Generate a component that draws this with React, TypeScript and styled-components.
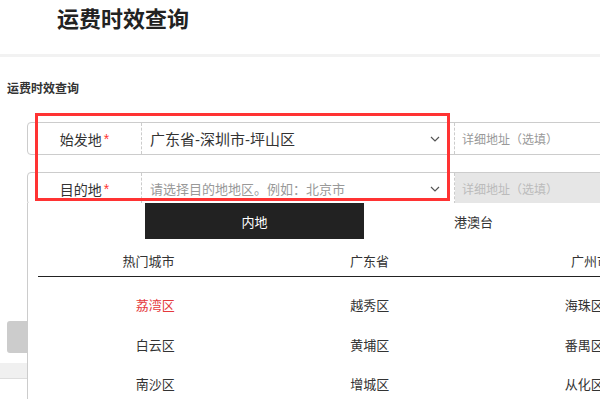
import React from 'react';
import styled, { createGlobalStyle } from 'styled-components';

const GlobalStyle = createGlobalStyle`
  html, body {
    margin: 0;
    padding: 0;
    overflow: hidden;
    background: #fff;
    font-family: "Liberation Sans", "Noto Sans CJK SC", sans-serif;
    color: #333;
  }
`;

const Page = styled.div`
  width: 600px;
  height: 399px;
  overflow: hidden;
`;

const Header = styled.header`
  height: 54px;
  box-sizing: border-box;
  padding: 4px 0 0 57px;
  border-bottom: 3px solid #f2f2f2;
  height: 57px;
`;

const Title = styled.h1`
  margin: 0;
  font-size: 22px;
  line-height: 32px;
  font-weight: bold;
  color: #222;
`;

const Content = styled.main`
  padding-left: 7px;
`;

const SectionTitle = styled.h2`
  margin: 24px 0 0;
  font-size: 12px;
  line-height: 16px;
  font-weight: bold;
  color: #333;
`;

const Form = styled.div`
  position: relative;
  margin: 25px 0 0 20px;
`;

const Row = styled.div<{ $gap?: number }>`
  position: relative;
  display: flex;
  width: 700px;
  height: 33px;
  box-sizing: border-box;
  margin-top: ${({ $gap }) => $gap ?? 0}px;
  border: 1px solid #ccc;
  border-radius: 4px;
`;

const Label = styled.div`
  width: 114px;
  box-sizing: border-box;
  border-right: 1px dashed #ccc;
  display: flex;
  align-items: center;
  justify-content: center;
  font-size: 14px;
  color: #333;
`;

const Required = styled.span`
  color: #f33;
  margin-left: 2px;
  font-size: 14px;
`;

const Select = styled.div<{ $placeholder?: boolean }>`
  width: 313px;
  box-sizing: border-box;
  border-right: 1px dashed #ccc;
  display: flex;
  align-items: center;
  justify-content: space-between;
  padding: 0 14px 0 8px;
  font-size: ${({ $placeholder }) => ($placeholder ? 13 : 15)}px;
  color: ${({ $placeholder }) => ($placeholder ? '#999' : '#333')};
`;

const Detail = styled.div<{ $disabled?: boolean }>`
  flex: 1;
  display: flex;
  align-items: center;
  padding-left: 7px;
  font-size: 12px;
  color: ${({ $disabled }) => ($disabled ? '#bbb' : '#999')};
  background: ${({ $disabled }) => ($disabled ? '#e6e6e6' : 'transparent')};
`;

const Highlight = styled.div`
  position: absolute;
  left: 8px;
  top: -9px;
  width: 415px;
  height: 88px;
  box-sizing: border-box;
  border: 3px solid #f33;
  pointer-events: none;
  z-index: 20;
`;

const Dropdown = styled.div`
  position: absolute;
  left: -1px;
  top: calc(100% - 1px);
  width: 686px;
  height: 220px;
  background: #fff;
  border-left: 1px solid #ccc;
  z-index: 10;
`;

const Tabs = styled.div`
  display: flex;
  margin-left: 117px;
`;

const Tab = styled.div<{ $active?: boolean }>`
  width: 219px;
  height: 36px;
  display: flex;
  align-items: center;
  justify-content: center;
  font-size: 13px;
  background: ${({ $active }) => ($active ? '#222' : '#fff')};
  color: ${({ $active }) => ($active ? '#fff' : '#333')};
`;

const ColumnHead = styled.div`
  display: grid;
  grid-template-columns: repeat(3, 221px);
  margin-left: 10px;
  height: 38px;
  box-sizing: border-box;
  padding-top: 5px;
  border-bottom: 1px solid #222;
`;

const HeadCell = styled.div`
  display: flex;
  align-items: center;
  justify-content: center;
  font-size: 13px;
  color: #333;
`;

const Districts = styled.div`
  display: grid;
  grid-template-columns: repeat(3, 214.5px);
  grid-auto-rows: 39.5px;
  margin: 8px 0 0 20px;
`;

const District = styled.div<{ $active?: boolean }>`
  display: flex;
  align-items: center;
  justify-content: center;
  font-size: 13px;
  color: ${({ $active }) => ($active ? '#e4393c' : '#333')};
`;

const SubmitButton = styled.div`
  width: 120px;
  height: 32px;
  margin-top: 116px;
  background: #ccc;
  border-radius: 3px;
`;

const Footer = styled.div`
  height: 15px;
  margin: 10px 0 0 -7px;
  background: #f0f0f0;
  border-bottom: 1px solid #ddd;
`;

const Chevron = () => (
  <svg width="10" height="6" viewBox="0 0 10 6" fill="none">
    <path d="M1 1 L5 5 L9 1" stroke="#555" strokeWidth="1.2" />
  </svg>
);

const districts = ['荔湾区', '越秀区', '海珠区', '白云区', '黄埔区', '番禺区', '南沙区', '增城区', '从化区'];

export default function App() {
  return (
    <Page>
      <GlobalStyle />
      <Header>
        <Title>运费时效查询</Title>
      </Header>
      <Content>
        <SectionTitle>运费时效查询</SectionTitle>
        <Form>
          <Row>
            <Label>
              始发地<Required>*</Required>
            </Label>
            <Select>
              <span>广东省-深圳市-坪山区</span>
              <Chevron />
            </Select>
            <Detail>详细地址（选填）</Detail>
          </Row>
          <Row $gap={17}>
            <Label>
              目的地<Required>*</Required>
            </Label>
            <Select $placeholder>
              <span>请选择目的地地区。例如：北京市</span>
              <Chevron />
            </Select>
            <Detail $disabled>详细地址（选填）</Detail>
            <Dropdown>
              <Tabs>
                <Tab $active>内地</Tab>
                <Tab>港澳台</Tab>
              </Tabs>
              <ColumnHead>
                <HeadCell>热门城市</HeadCell>
                <HeadCell>广东省</HeadCell>
                <HeadCell>广州市</HeadCell>
              </ColumnHead>
              <Districts>
                {districts.map((d, i) => (
                  <District key={d} $active={i === 0}>
                    {d}
                  </District>
                ))}
              </Districts>
            </Dropdown>
          </Row>
          <Highlight />
        </Form>
        <SubmitButton />
        <Footer />
      </Content>
    </Page>
  );
}
